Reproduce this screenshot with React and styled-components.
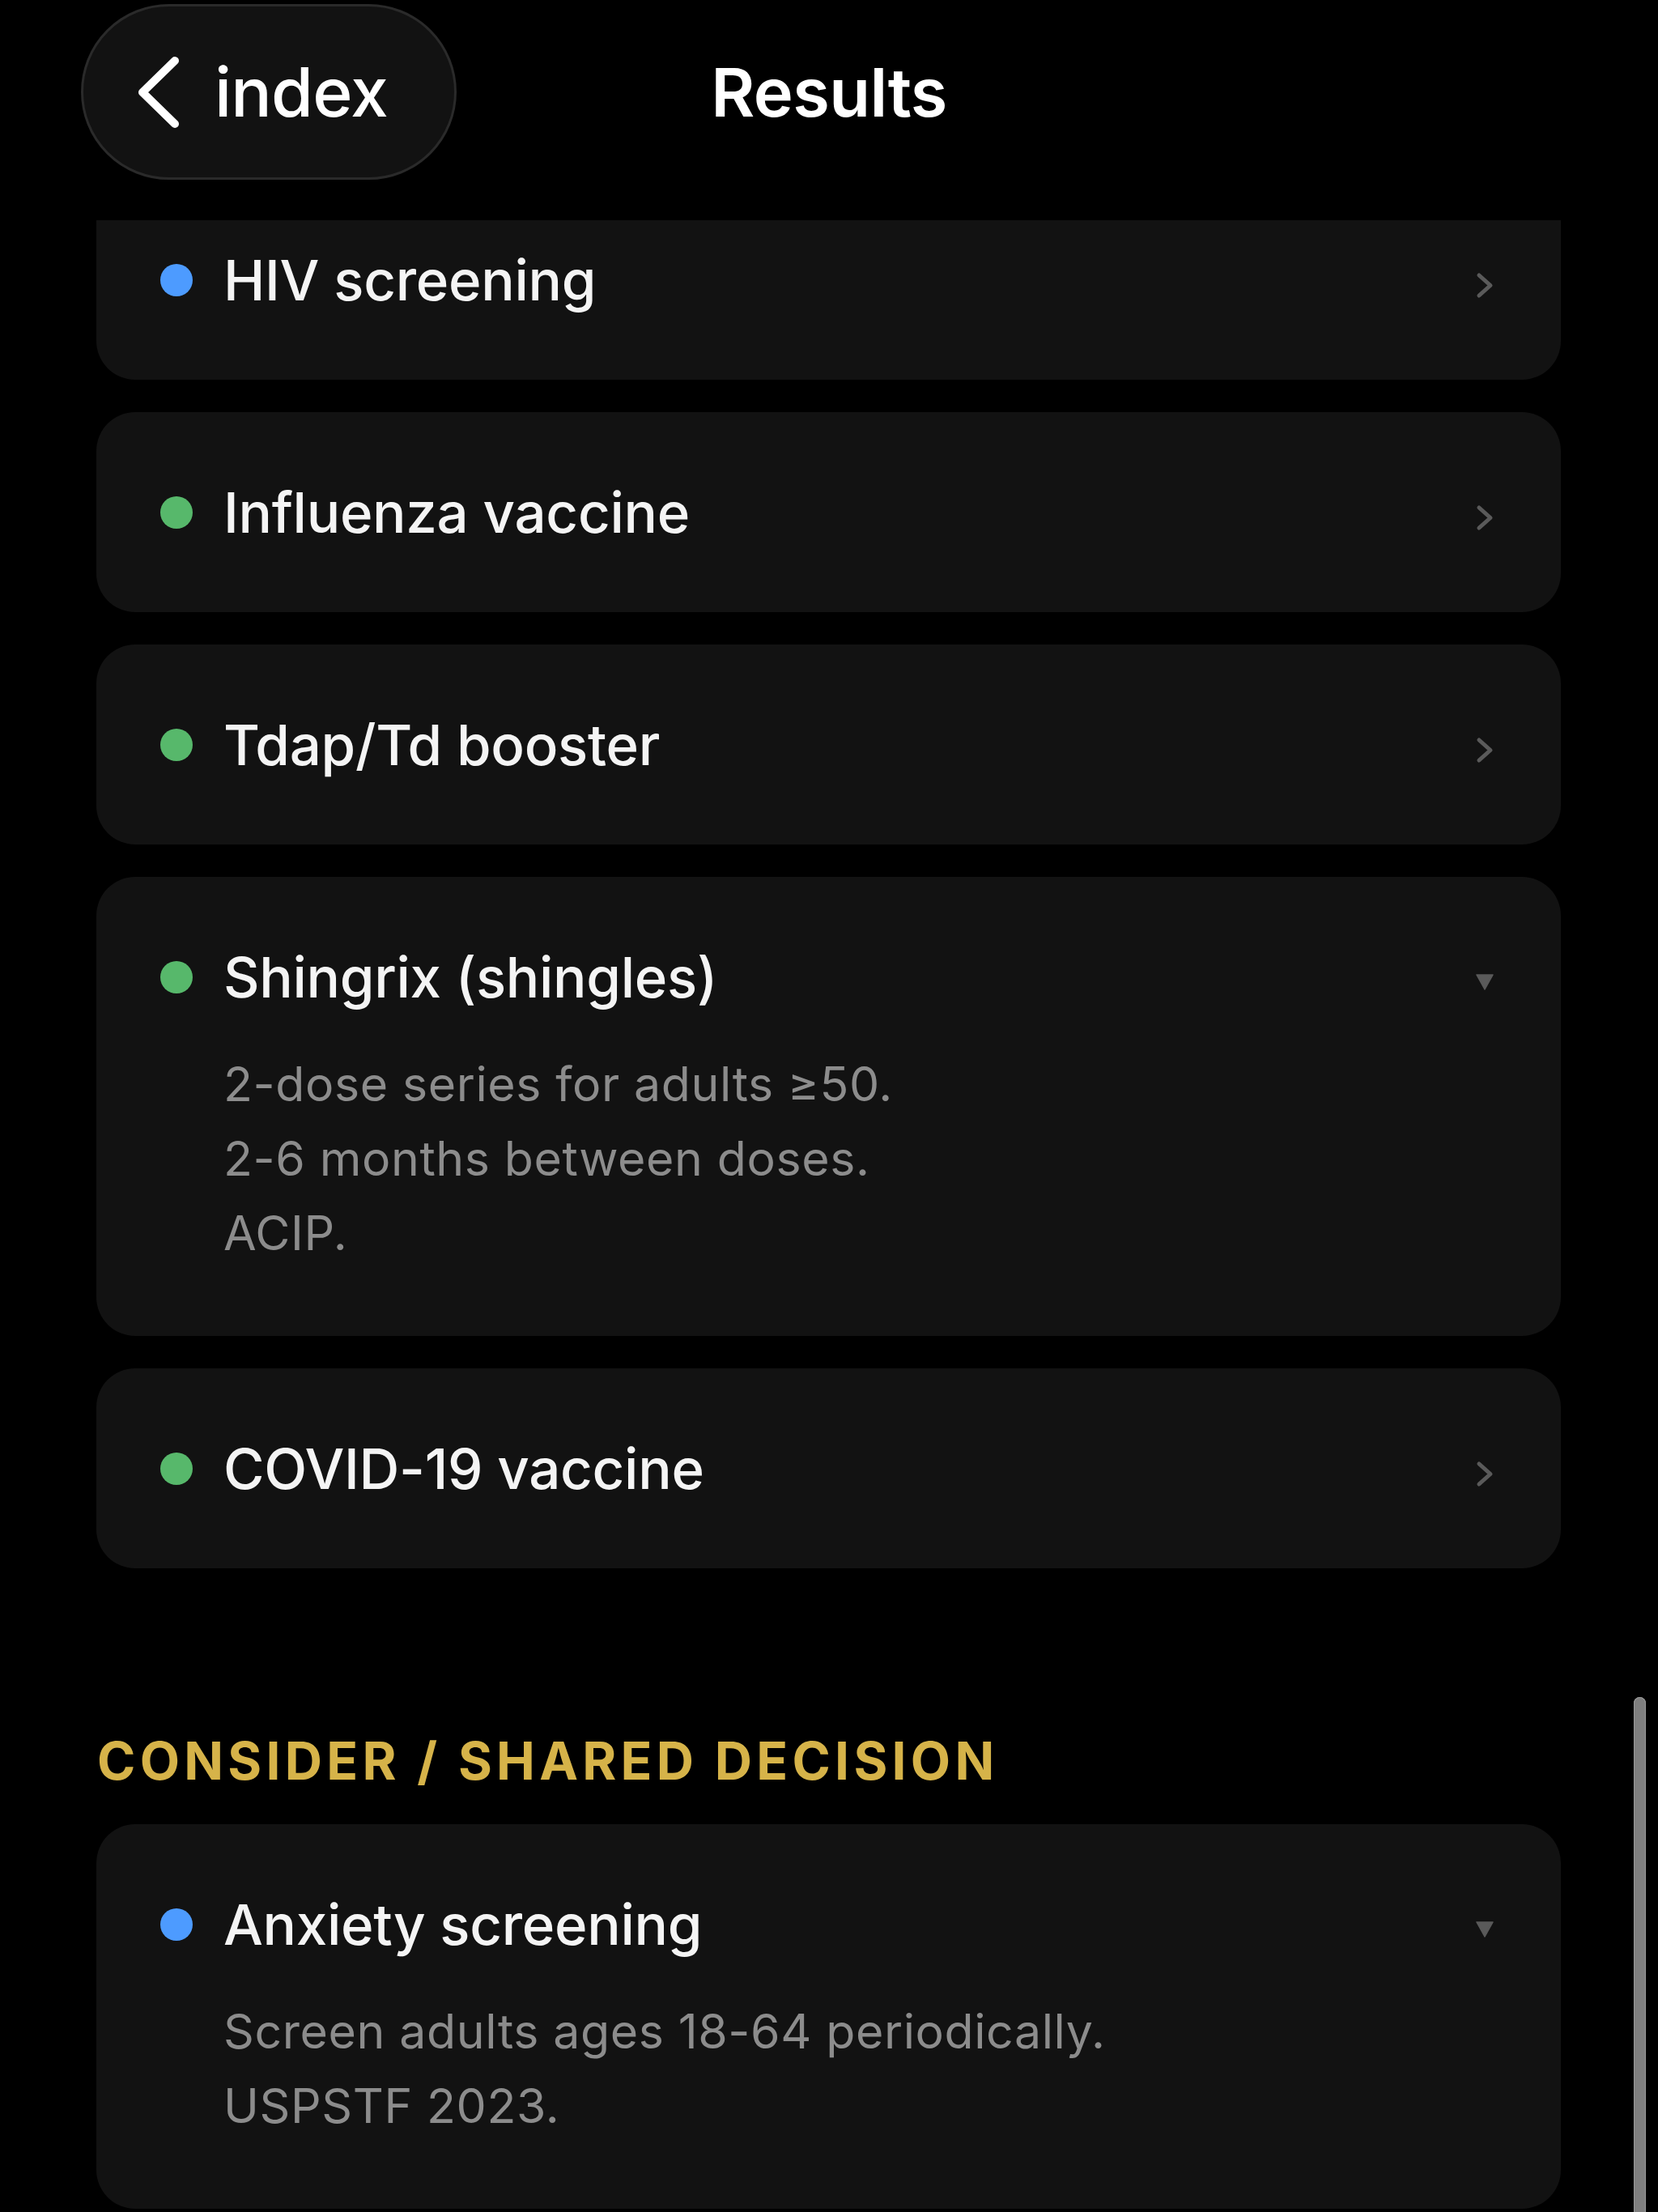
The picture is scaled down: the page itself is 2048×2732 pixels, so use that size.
import React from 'react'
import styled, { createGlobalStyle } from 'styled-components'

const GlobalStyle = createGlobalStyle`
  html, body {
    margin: 0;
    padding: 0;
    background: #000;
  }
  body {
    font-family: "Inter", "Noto Sans", "Liberation Sans", sans-serif;
    -webkit-font-smoothing: antialiased;
  }
`

const Screen = styled.div`
  position: relative;
  width: 2048px;
  height: 2732px;
  overflow: hidden;
  background: #000;
  color: #f2f2f2;
`

const Header = styled.header`
  display: grid;
  grid-template-columns: 1fr auto 1fr;
  align-items: center;
  height: 272px;
  box-sizing: border-box;
  padding: 5px 100px 50px;
`

const BackButton = styled.button`
  justify-self: start;
  display: flex;
  align-items: center;
  gap: 42px;
  height: 217px;
  box-sizing: border-box;
  padding: 0 82px 0 64px;
  border-radius: 999px;
  border: 3px solid #2a2a2a;
  background: #121212;
  color: #fff;
  font-family: inherit;
  font-size: 84px;
  font-weight: 500;
  letter-spacing: -0.8px;
  line-height: 1;
  svg { display: block; }
`

const Title = styled.h1`
  margin: 0;
  font-size: 83px;
  font-weight: 600;
  letter-spacing: -0.6px;
  color: #fff;
`

const Viewport = styled.main`
  height: 2460px;
  overflow: hidden;
`

const List = styled.div`
  display: flex;
  flex-direction: column;
  gap: 40px;
  padding: 0 120px 0 119px;
  margin-top: -50px;
`

const SectionTitle = styled.h2`
  margin: 159px 0 0 1px;
  font-size: 64px;
  line-height: 77px;
  font-weight: 700;
  letter-spacing: 5.3px;
  text-transform: uppercase;
  color: #d6b349;
`

const Card = styled.section`
  background: #121212;
  border-radius: 48px;
  padding: 82px 83px 81px 79px;
`

const Head = styled.div`
  display: flex;
  align-items: center;
  height: 84px;
`

const Dot = styled.span`
  flex: none;
  width: 40px;
  height: 40px;
  border-radius: 50%;
  background: ${p => (p.$tone === 'blue' ? '#4d9bff' : '#57b86b')};
  margin-right: 38px;
`

const Name = styled.span`
  flex: 1;
  font-size: 69px;
  line-height: 84px;
  font-weight: 500;
  letter-spacing: -0.3px;
  color: #f4f4f4;
`

const Indicator = styled.span`
  flex: none;
  display: flex;
  align-items: center;
  margin-top: 12px;
  svg { display: block; }
`

const Details = styled.div`
  margin-top: 44px;
  padding-left: 78px;
`

const Line = styled.div`
  font-size: 59px;
  line-height: 92px;
  font-weight: 400;
  letter-spacing: 0.6px;
  color: #8c8c8c;
`

const ScrollThumb = styled.div`
  position: absolute;
  right: 15px;
  top: 2096px;
  width: 15px;
  height: 700px;
  border-radius: 8px;
  background: #7f7f7f;
  box-shadow: inset 0 0 0 1px #999;
`

const ChevronLeft = () => (
  <svg width="56" height="92" viewBox="0 0 56 92">
    <polyline points="49,7 9,46 49,85" fill="none" stroke="#fff" strokeWidth="10" strokeLinecap="round" strokeLinejoin="round" />
  </svg>
)

const ChevronRight = () => (
  <svg width="22" height="33" viewBox="0 0 22 33">
    <polyline points="4,4 18,16.5 4,29" fill="none" stroke="#5a5a5a" strokeWidth="5" strokeLinecap="round" strokeLinejoin="round" />
  </svg>
)

const Caret = () => (
  <svg width="22" height="20" viewBox="0 0 22 20">
    <polygon points="1,1 21,1 11,19" fill="#5a5a5a" stroke="#5a5a5a" strokeWidth="1.5" strokeLinejoin="round" />
  </svg>
)

const Item = ({ tone, name, lines }) => {
  const open = lines && lines.length > 0
  return (
    <Card>
      <Head>
        <Dot $tone={tone} />
        <Name>{name}</Name>
        <Indicator>{open ? <Caret /> : <ChevronRight />}</Indicator>
      </Head>
      {open && (
        <Details>
          {lines.map((l, i) => <Line key={i}>{l}</Line>)}
        </Details>
      )}
    </Card>
  )
}

const recommended = [
  { tone: 'blue', name: 'HIV screening' },
  { tone: 'green', name: 'Influenza vaccine' },
  { tone: 'green', name: 'Tdap/Td booster' },
  { tone: 'green', name: 'Shingrix (shingles)', lines: ['2-dose series for adults ≥50.', '2-6 months between doses.', 'ACIP.'] },
  { tone: 'green', name: 'COVID-19 vaccine' },
]

const consider = [
  { tone: 'blue', name: 'Anxiety screening', lines: ['Screen adults ages 18-64 periodically.', 'USPSTF 2023.'] },
]

export default function App() {
  return (
    <Screen>
      <GlobalStyle />
      <Header>
        <BackButton>
          <ChevronLeft />
          index
        </BackButton>
        <Title>Results</Title>
      </Header>
      <Viewport>
        <List>
          {recommended.map(it => <Item key={it.name} {...it} />)}
          <SectionTitle>Consider / Shared decision</SectionTitle>
          {consider.map(it => <Item key={it.name} {...it} />)}
        </List>
      </Viewport>
      <ScrollThumb />
    </Screen>
  )
}
